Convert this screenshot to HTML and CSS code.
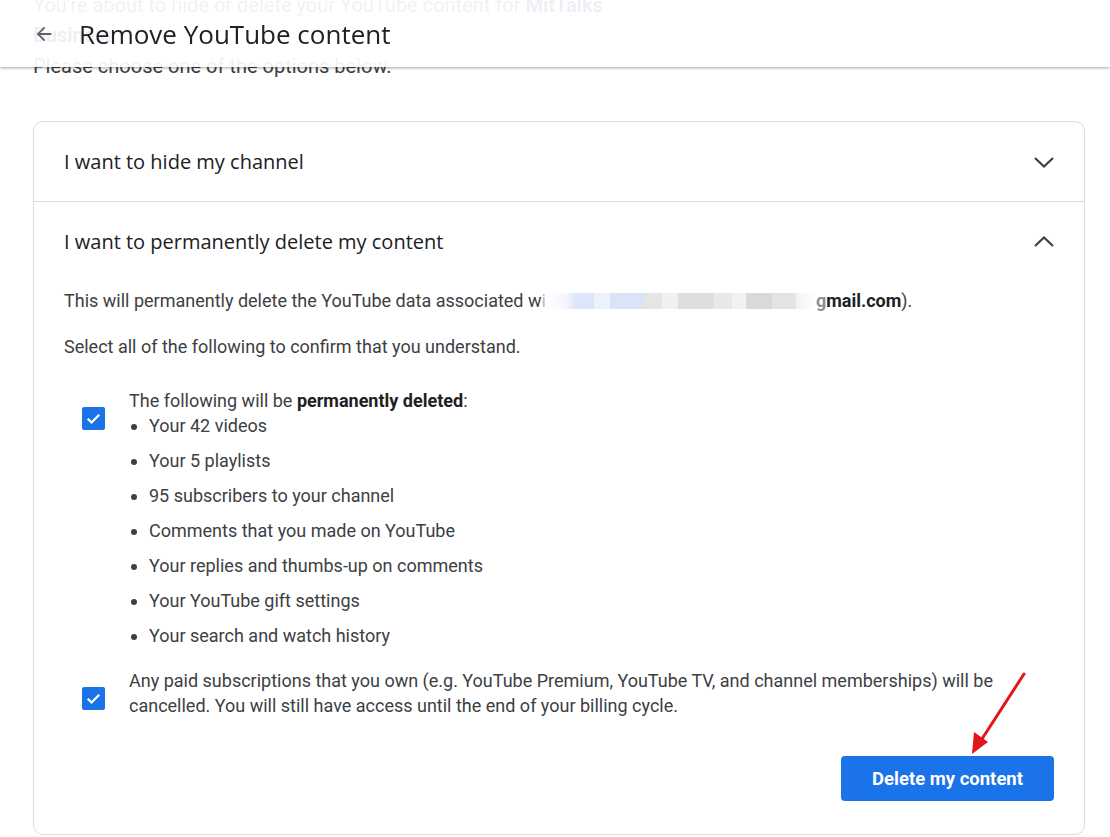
FILE: index.html
```html
<!DOCTYPE html>
<html lang="en">
<head>
  <meta charset="UTF-8">
  <title>Remove YouTube content</title>
  <link rel="stylesheet" href="styles.css">
</head>
<body>

  <div class="topbar">
    <svg class="back" width="22" height="22" viewBox="0 0 24 24">
      <path d="M20 11H7.83l5.59-5.59L12 4l-8 8 8 8 1.41-1.41L7.83 13H20v-2z" fill="#5f6368"/>
    </svg>
    <h1>Remove YouTube content</h1>
  </div>

  <main class="page">
    <p class="intro">You're about to hide or delete your YouTube content for <strong>MitTalks Business</strong></p>
    <p class="intro">Please choose one of the options below.</p>

    <div class="card">
      <div class="section">
        <div class="section-head">
          <span>I want to hide my channel</span>
          <svg width="24" height="24" viewBox="0 0 24 24"><path d="M3 8l9 8.5L21 8" fill="none" stroke="#3c4043" stroke-width="2.2"/></svg>
        </div>
      </div>

      <div class="section">
        <div class="section-head">
          <span>I want to permanently delete my content</span>
          <svg width="24" height="24" viewBox="0 0 24 24"><path d="M3 16l9-8.5 9 8.5" fill="none" stroke="#3c4043" stroke-width="2.2"/></svg>
        </div>

        <div class="section-body">
          <p>This will permanently delete the YouTube data associated w<span class="fade">i</span><span class="blur"></span><strong class="fadeg">g</strong><strong>mail.com</strong>).</p>
          <p class="select">Select all of the following to confirm that you understand.</p>

          <div class="check-row">
            <span class="box">
              <svg width="23" height="23" viewBox="0 0 22 22"><rect width="22" height="22" rx="2" fill="#1a73e8"/><path d="M5.5 11.2l3.6 3.6 7.4-7.4" fill="none" stroke="#fff" stroke-width="2.2"/></svg>
            </span>
            <div class="check-text">
              The following will be <strong>permanently deleted</strong>:
              <ul>
                <li>Your 42 videos</li>
                <li>Your 5 playlists</li>
                <li>95 subscribers to your channel</li>
                <li>Comments that you made on YouTube</li>
                <li>Your replies and thumbs-up on comments</li>
                <li>Your YouTube gift settings</li>
                <li>Your search and watch history</li>
              </ul>
            </div>
          </div>

          <div class="check-row">
            <span class="box">
              <svg width="23" height="23" viewBox="0 0 22 22"><rect width="22" height="22" rx="2" fill="#1a73e8"/><path d="M5.5 11.2l3.6 3.6 7.4-7.4" fill="none" stroke="#fff" stroke-width="2.2"/></svg>
            </span>
            <div class="check-text">
              Any paid subscriptions that you own (e.g. YouTube Premium, YouTube TV, and channel memberships) will be cancelled. You will still have access until the end of your billing cycle.
            </div>
          </div>

          <div class="actions">
            <button class="delete">Delete my content</button>
            <svg class="arrow" width="70" height="90" viewBox="0 0 70 90">
              <path d="M60 4L16 72" stroke="#e0171b" stroke-width="3" fill="none" stroke-linecap="round"/>
              <path d="M8 84L10 62 24 72z" fill="#e0171b"/>
            </svg>
          </div>
        </div>
      </div>
    </div>
  </main>

</body>
</html>
```

FILE: styles.css
```css
body {
  margin: 0;
  font-family: Roboto, "Liberation Sans", sans-serif;
  color: #202124;
  background: #fff;
  overflow: hidden;
}

.topbar {
  position: fixed;
  top: 0;
  left: 0;
  right: 0;
  height: 67px;
  display: flex;
  align-items: center;
  background: rgba(255, 255, 255, 0.93);
  box-shadow: 0 1px 3px rgba(0, 0, 0, 0.35);
  z-index: 2;
}
.back {
  margin-left: 33px;
  margin-right: 24px;
}
.topbar h1 {
  margin: 0;
  font-family: "Open Sans", Roboto, sans-serif;
  font-weight: 400;
  font-size: 26px;
  color: #202124;
}

.page {
  padding: 0 25px 0 33px;
  margin-top: -10px;
}
.intro {
  margin: 0;
  font-size: 20px;
  line-height: 30px;
  color: #3c4043;
  max-width: 630px;
}
.intro strong {
  color: #1a1a60;
}
.intro + .intro {
  margin-top: 1px;
}

.card {
  margin-top: 40px;
  border: 1px solid #dadce0;
  border-radius: 10px;
}
.section + .section {
  border-top: 1px solid #dadce0;
}
.section-head {
  height: 79px;
  padding: 0 28px 0 30px;
  display: flex;
  align-items: center;
  justify-content: space-between;
  font-family: "Open Sans", Roboto, sans-serif;
  font-size: 20px;
  color: #202124;
}

.section-body {
  padding: 7px 30px 33px 30px;
  font-size: 18px;
  line-height: 25px;
  color: #3c4043;
}
.section-body p {
  margin: 0;
}
.section-body .select {
  margin-top: 21px;
}
.section-body strong {
  color: #202124;
}
.fade {
  opacity: 0.35;
}
.fadeg {
  opacity: 0.5;
}
.blur {
  display: inline-block;
  vertical-align: -2px;
  width: 270px;
  height: 16px;
  background: linear-gradient(90deg,
    #ffffff 0, #f4f6fb 20px,
    #dbe6f8 30px, #dbe6f8 48px,
    #eef2fb 48px, #eef2fb 64px,
    #d9e4f7 64px, #d9e4f7 98px,
    #e5e5e5 98px, #e5e5e5 116px,
    #f0f0f0 116px, #f0f0f0 132px,
    #dedede 132px, #dedede 168px,
    #e8e8e8 168px, #e8e8e8 186px,
    #f2f2f2 186px, #f2f2f2 200px,
    #d9d9d9 200px, #d9d9d9 226px,
    #e4e4e4 226px, #e4e4e4 250px,
    #f2f2f2 250px, #ffffff 270px);
}

.check-row {
  display: flex;
  margin-top: 29px;
}
.check-row + .check-row {
  margin-top: 20px;
}
.box {
  margin: 19px 24px 0 18px;
  height: 23px;
}
.check-text {
  flex: 1;
  color: #3c4043;
}
.check-text ul {
  margin: 0;
  padding-left: 20px;
}
.check-text li {
  margin-top: 10px;
}
.check-text li:first-child {
  margin-top: 0;
}

.actions {
  position: relative;
  display: flex;
  justify-content: flex-end;
  margin-top: 38px;
}
.delete {
  width: 213px;
  height: 45px;
  border: none;
  border-radius: 4px;
  background: #1a73e8;
  color: #fff;
  font-family: Roboto, sans-serif;
  font-weight: 700;
  font-size: 18.5px;
  cursor: pointer;
}
.arrow {
  position: absolute;
  right: 20px;
  top: -86px;
}
```
